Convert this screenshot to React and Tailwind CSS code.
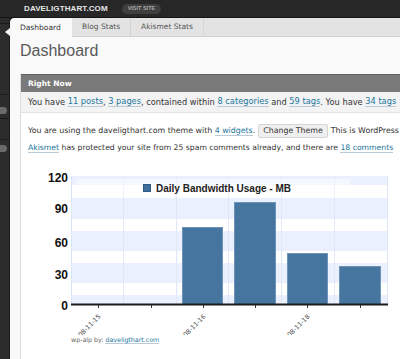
import React from 'react';

const Link = ({ children }) => (
    <span className="text-[#21759b] border-b border-[#b9cbd9] leading-[9px]">{children}</span>
);

const bands = [
    [176, 9],
    [198, 21],
    [231, 20],
    [263, 20],
    [295, 9],
];
const vlines = [123, 176, 228, 281, 334, 387];
const ticks = [98, 151, 203, 255, 307, 360];
const bars = [
    { x: 182, w: 41, top: 227 },
    { x: 234, w: 42, top: 202 },
    { x: 287, w: 41, top: 253 },
    { x: 339, w: 42, top: 266 },
];
const yLabels = [
    ['120', 182],
    ['90', 213],
    ['60', 247],
    ['30', 279],
    ['0', 310],
];
const xLabels = [
    ['08-11-15', 101],
    ['08-11-16', 206],
    ['08-11-18', 310],
];

const BandwidthChart = () => (
    <svg width="379" height="181" className="block">
        <g transform="translate(-21,-154)">
            <rect x="71" y="176" width="316" height="128" fill="#ffffff" />
            {bands.map(([y, h]) => (
                <rect key={y} x="71" y={y} width="316" height={h} fill="#eaf0fd" />
            ))}
            <line x1="71.5" y1="176" x2="71.5" y2="304" stroke="#dde6f5" />
            {vlines.map((x) => (
                <line key={x} x1={x + 0.5} y1="176" x2={x + 0.5} y2="304" stroke="#dfe8f7" />
            ))}
            <rect x="76" y="179" width="274" height="18" fill="#ffffff" opacity="0.45" />
            {bars.map((b) => (
                <rect
                    key={b.x}
                    x={b.x + 0.5}
                    y={b.top + 0.5}
                    width={b.w - 1}
                    height={304 - b.top}
                    fill="#46759f"
                    stroke="#6d94b8"
                    strokeWidth="1"
                />
            ))}
            <line x1="71" y1="304.5" x2="388" y2="304.5" stroke="#1a1a1a" strokeWidth="2" />
            {ticks.map((x) => (
                <line key={x} x1={x + 0.5} y1="305" x2={x + 0.5} y2="308" stroke="#333" />
            ))}
            {yLabels.map(([t, y]) => (
                <text
                    key={t}
                    x="68"
                    y={y}
                    textAnchor="end"
                    fontFamily="Liberation Sans, Arial, sans-serif"
                    fontWeight="bold"
                    fontSize="12"
                    fill="#111"
                >
                    {t}
                </text>
            ))}
            <rect x="143.5" y="184.5" width="7" height="7" fill="#3f6f9c" stroke="#2f5a85" />
            <text
                x="156"
                y="192"
                fontFamily="Liberation Sans, Arial, sans-serif"
                fontWeight="bold"
                fontSize="10"
                fill="#222"
            >
                Daily Bandwidth Usage - MB
            </text>
            {xLabels.map(([t, x]) => (
                <text
                    key={t}
                    x={x}
                    y="317"
                    textAnchor="end"
                    transform={`rotate(-45 ${x} 317)`}
                    fontFamily="DejaVu Sans, sans-serif"
                    fontSize="6.3"
                    fill="#444"
                >
                    {t}
                </text>
            ))}
        </g>
    </svg>
);

const App = () => {
    return (
        <div className="w-[400px] h-[359px] overflow-hidden bg-[#2a2a2a] font-['DejaVu_Sans',sans-serif] text-[#333]">
            {/* Top bar */}
            <div className="h-[18px] bg-[#272727] border-b border-[#141414] flex items-center pl-[24px] gap-[14px]">
                <span className="font-['Liberation_Sans',Arial,sans-serif] font-bold text-[8px] text-[#e6e6e6] tracking-[0.1px]">
                    DAVELIGTHART.COM
                </span>
                <span className="h-[10px] px-[6px] rounded-full bg-[#3e3e3e] flex items-center font-['Liberation_Sans',Arial,sans-serif] font-bold text-[5.5px] text-[#a8a8a8]">
                    VISIT SITE
                </span>
            </div>

            <div className="flex h-[341px]">
                {/* Sidebar */}
                <div className="relative w-[10px] shrink-0 bg-[#2c2c2c] border-r border-[#1c1c1c]">
                    <div className="absolute left-[5px] top-[10px] w-0 h-0 border-y-[4px] border-y-transparent border-r-[5px] border-r-[#f9f9f9]" />
                    <div className="absolute left-0 right-0 top-[5px] h-px bg-[#1a1a1a]" />
                    <div className="absolute left-0 right-0 top-[76px] h-px bg-[#1a1a1a]" />
                    <div className="absolute left-0 right-0 top-[100px] h-px bg-[#1a1a1a]" />
                    <div className="absolute left-0 right-0 top-[121px] h-px bg-[#1a1a1a]" />
                    <div className="absolute left-[-3px] top-[89px] w-[10px] h-[7px] rounded-full bg-[#6a6a6a]" />
                    <div className="absolute left-[-3px] top-[127px] w-[10px] h-[7px] rounded-full bg-[#6a6a6a]" />
                </div>

                {/* Main */}
                <div className="flex-1 bg-[#f9f9f9] rounded-tl-[5px] overflow-hidden">
                    {/* Tabs */}
                    <div className="h-[19px] flex bg-[#e3e3e3] border-b border-[#cfcfcf] text-[7.5px]">
                        <div className="w-[62px] bg-[#f9f9f9] flex items-center pl-[10px] text-[#333] -mb-px">
                            Dashboard
                        </div>
                        <div className="w-[59px] flex items-center pl-[10px] text-[#555] border-r border-[#d2d2d2]">
                            Blog Stats
                        </div>
                        <div className="w-[73px] flex items-center pl-[10px] text-[#555] border-r border-[#d6d6d6]">
                            Akismet Stats
                        </div>
                    </div>

                    {/* Heading */}
                    <div className="h-[37px] pl-[10px] pt-[4px] font-['Liberation_Sans',Arial,sans-serif] text-[16px] text-[#5a5a5a] leading-[20px]">
                        Dashboard
                    </div>

                    {/* Right Now box */}
                    <div className="ml-[10px] border-l border-[#dcdcdc] bg-white h-[300px] whitespace-nowrap">
                        <div className="h-[18px] bg-[#7a7a7a] border-t border-[#606060] flex items-center pl-[7px] font-bold text-white text-[7.5px]">
                            Right Now
                        </div>
                        <div className="h-[21px] bg-[#f3f3f3] border-b border-[#e2e2e2] flex items-center pl-[7px] text-[8.25px]">
                            You have&nbsp;<Link>11 posts</Link>,&nbsp;<Link>3 pages</Link>, contained within&nbsp;
                            <Link>8 categories</Link>&nbsp;and&nbsp;<Link>59 tags</Link>. You have&nbsp;
                            <Link>34 tags</Link>
                        </div>
                        <div className="mt-[10px] h-[15px] flex items-center pl-[7px] text-[7.85px]">
                            You are using the daveligthart.com theme with&nbsp;<Link>4 widgets</Link>.
                            <span className="mx-[3px] h-[14px] px-[4px] flex items-center bg-[#efefef] border border-[#d5d5d5] rounded-[2px] text-[#333]">
                                Change Theme
                            </span>
                            This is WordPress version
                        </div>
                        <div className="mt-[3px] h-[13px] flex items-center pl-[7px] text-[7.7px]">
                            <Link>Akismet</Link>&nbsp;has protected your site from 25 spam comments already, and there are&nbsp;
                            <Link>18 comments</Link>
                        </div>

                        <BandwidthChart />

                        <div className="pl-[50px] text-[6.3px] text-[#666] leading-[10px]">
                            wp-alp by: <span className="text-[#21759b] border-b border-[#b9cbd9]">daveligthart.com</span>
                        </div>
                    </div>
                </div>
            </div>
        </div>
    );
};

export default App;
